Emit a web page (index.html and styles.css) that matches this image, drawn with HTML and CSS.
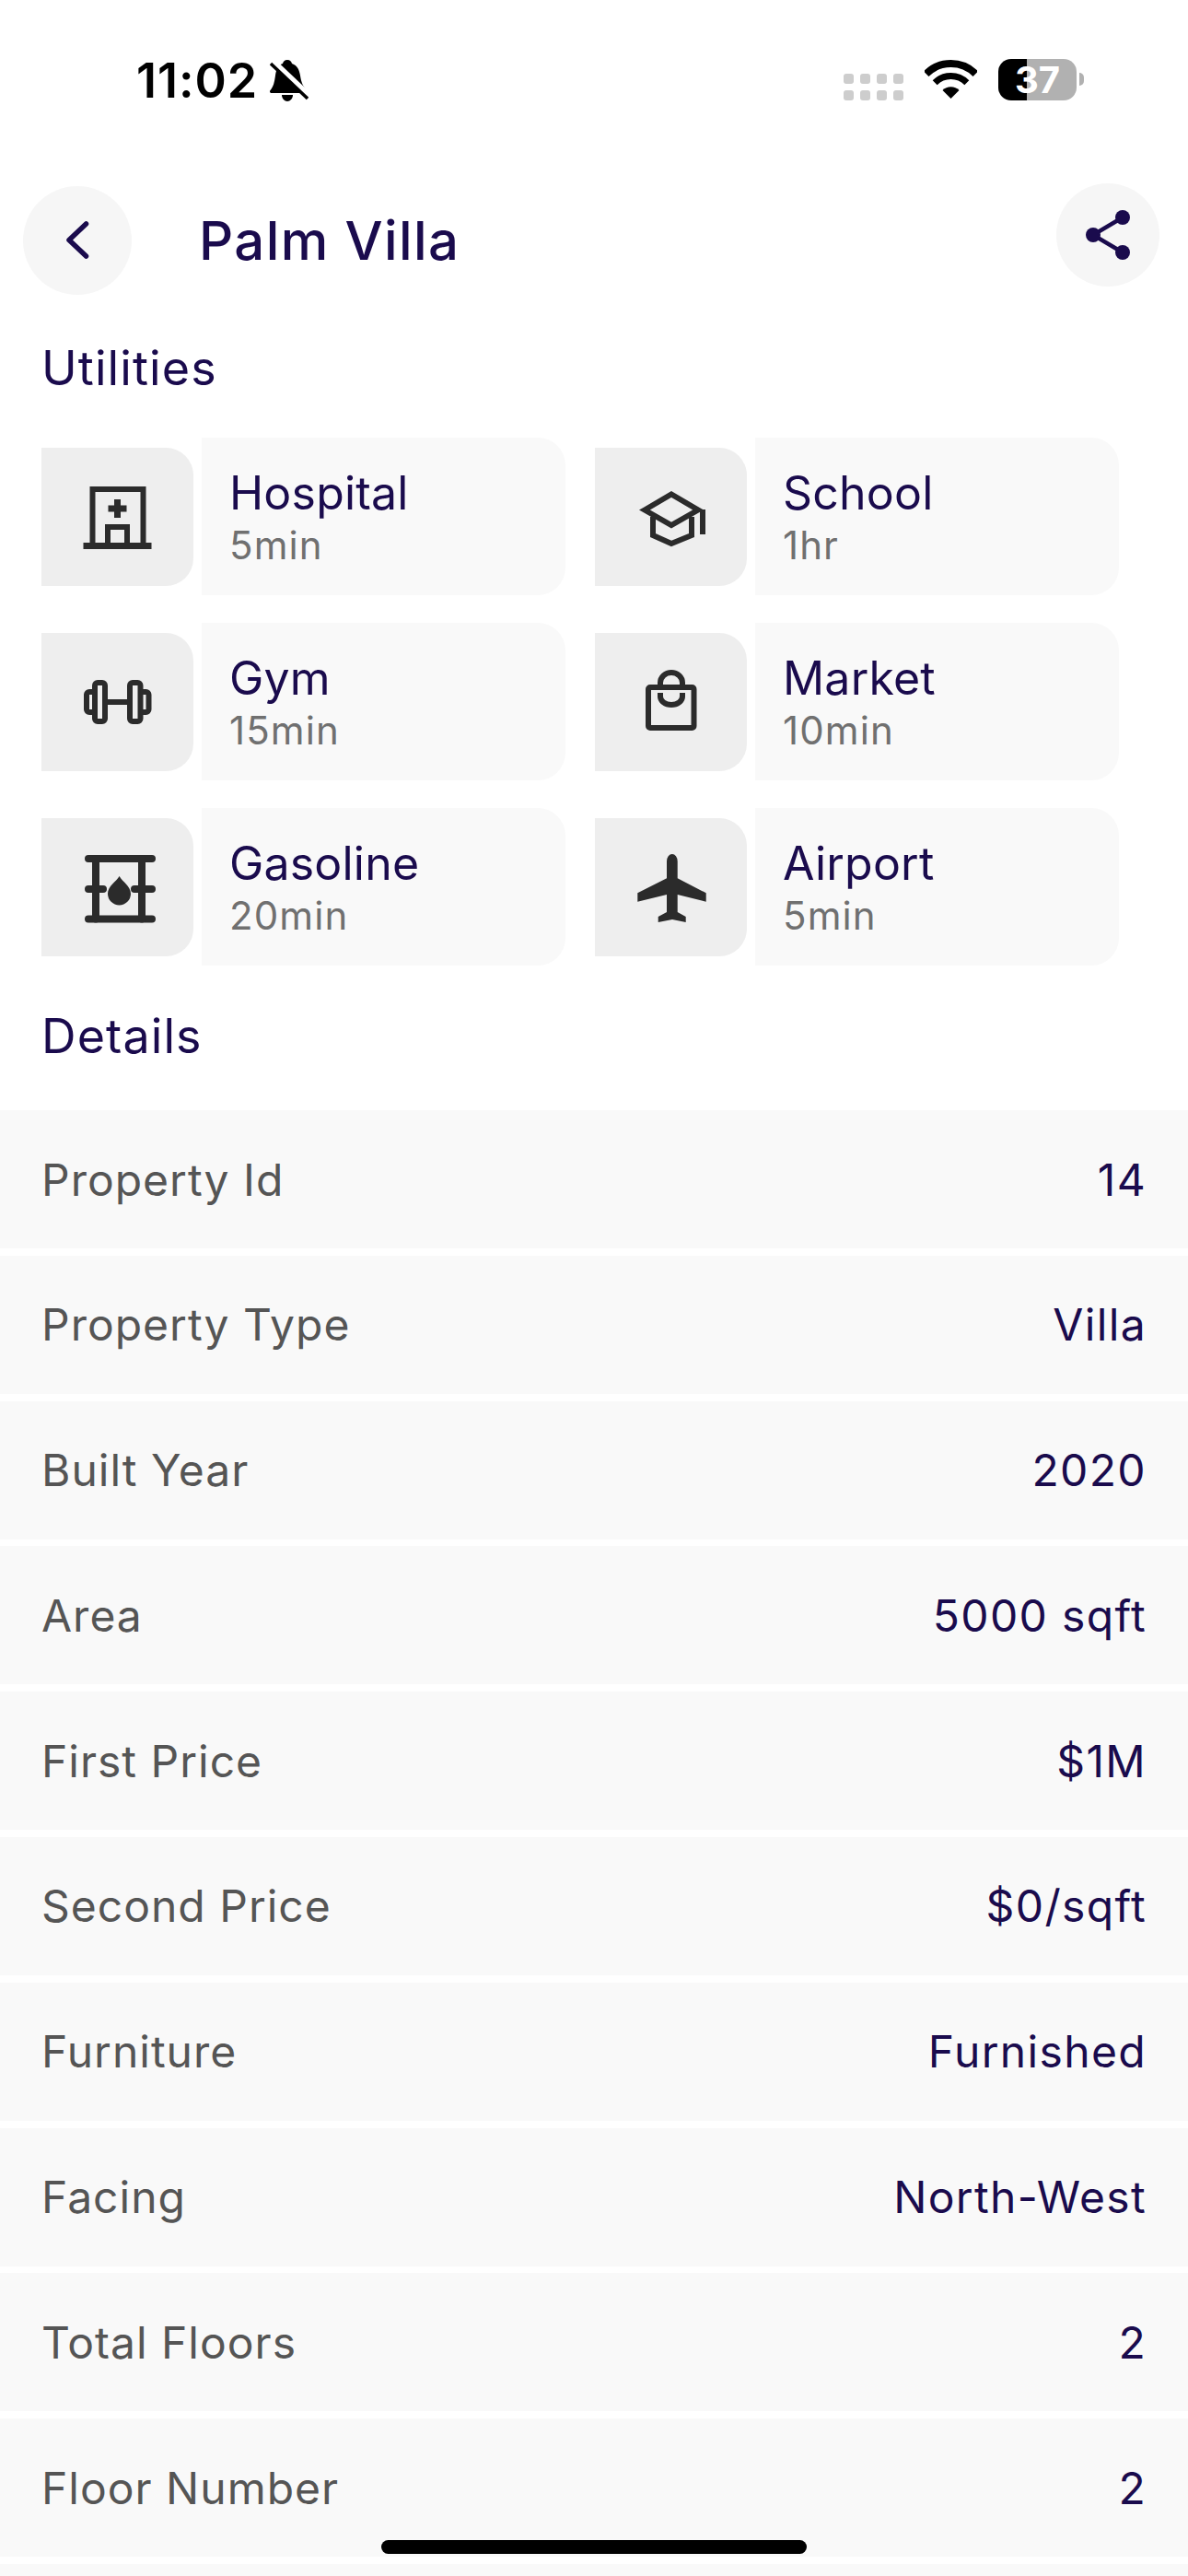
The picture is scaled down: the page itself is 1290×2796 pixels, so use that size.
FILE: index.html
```html
<!DOCTYPE html>
<html lang="en">
<head>
<meta charset="utf-8">
<title>Palm Villa</title>
<link rel="stylesheet" href="styles.css">
</head>
<body>
<div class="page">
  <div class="status">
    <span class="time">11:02</span>
    <svg class="bell" viewBox="0 0 42 45"><path class="ink" d="M19 0c3 0 4.500 2 5 4 6 2 8 7 9 13 1 7 3 12 7 16 1 1 .5 3-1.500 3H2c-2 0-2.500-2-1.500-3C4 29 5 24 6 17 7 10 9 6 14 4c.5-2 2-4 5-4z"/><path class="ink" d="M13 38h12c0 4-3 7-6 7s-6-3-6-7z"/><path class="cut" d="M2 0l40 38"/><path class="slash" d="M1 4l40 38"/></svg>
    <div class="status-right">
      <div class="dots"><i></i><i></i><i></i><i></i><i></i><i></i><i></i><i></i></div>
      <svg class="wifi" viewBox="0 0 57 42"><path class="wifi-arc w8" d="M1.630 15.130A38 38 0 0 1 55.370 15.130"/><path class="wifi-arc w7" d="M11.180 24.680A24.500 24.500 0 0 1 45.820 24.680"/><path class="ink" d="M28.500 42L19.500 33A12.700 12.700 0 0 1 37.500 33z"/></svg>
      <div class="battery"><span>37</span></div>
      <div class="nub"></div>
    </div>
  </div>

  <header class="header">
    <button class="round back" aria-label="Back">
      <svg viewBox="0 0 118 118"><path class="chev" d="M68.500 41L50 58.500 68.500 76"/></svg>
    </button>
    <h1 class="title">Palm Villa</h1>
    <button class="round share" aria-label="Share">
      <svg viewBox="0 0 112 112"><path class="share-line" d="M72 37L40 56l32 19"/><circle class="purple" cx="72" cy="37" r="8"/><circle class="purple" cx="40" cy="56" r="8"/><circle class="purple" cx="72" cy="75" r="8"/></svg>
    </button>
  </header>

  <h2 class="section utilities">Utilities</h2>
  <div class="grid">
    <div class="tile">
      <div class="tile-icon"><svg viewBox="0 0 165 150"><path class="st6" d="M55.500 104V45h55v59"/><path class="st7 bar" d="M45.500 106.500h74"/><path class="st7" d="M72.500 66h20M82.500 56v20"/><path class="st6" d="M72 104V86h21v18"/></svg></div>
      <div class="tile-body"><div class="name">Hospital</div><div class="sub">5min</div></div>
    </div>
    <div class="tile">
      <div class="tile-icon"><svg viewBox="0 0 165 150"><path class="st6" d="M54 67.500L83 50.500l29 17L83 84z"/><path class="st6" d="M63 75V95L83 104l22-9V75"/><path class="st6" d="M117 67V94"/></svg></div>
      <div class="tile-body"><div class="name">School</div><div class="sub">1hr</div></div>
    </div>
    <div class="tile">
      <div class="tile-icon"><svg viewBox="0 0 165 150"><rect class="st6" x="58" y="54" width="11" height="42" rx="3"/><rect class="st6" x="96" y="54" width="11.500" height="42" rx="3"/><path class="st6" d="M58 64h-6a3 3 0 0 0-3 3v16a3 3 0 0 0 3 3h6M107.500 64h6a3 3 0 0 1 3 3v16a3 3 0 0 1-3 3h-6M69 75h27"/></svg></div>
      <div class="tile-body"><div class="name">Gym</div><div class="sub">15min</div></div>
    </div>
    <div class="tile">
      <div class="tile-icon"><svg viewBox="0 0 165 150"><rect class="st6" x="58" y="59" width="49.500" height="44" rx="2"/><path class="st6" d="M71 59V54a12 11 0 0 1 24 0V59M71 65v4a12 9 0 0 0 24 0v-4"/></svg></div>
      <div class="tile-body"><div class="name">Market</div><div class="sub">10min</div></div>
    </div>
    <div class="tile">
      <div class="tile-icon"><svg viewBox="0 0 165 150"><path class="st8" d="M51 44h69M51 77h16M101 77h19M51 109.500h69"/><path class="st8" d="M59 44v65.500M109 44v65.500"/><path class="dark" d="M84.600 63C88 69 97 74 97 82a12.500 12.500 0 0 1-25 0C72 74 81 69 84.600 63z"/></svg></div>
      <div class="tile-body"><div class="name">Gasoline</div><div class="sub">20min</div></div>
    </div>
    <div class="tile">
      <div class="tile-icon"><svg viewBox="0 0 165 150"><path class="dark" d="M78 47a5.850 8 0 0 1 11.700 0V65.300L120.700 81.300V90.700L89.700 83V102L98.700 107V113L84 110 68.700 113V107L78 102V83L46.300 90.700V81.300L78 65.300z"/></svg></div>
      <div class="tile-body"><div class="name">Airport</div><div class="sub">5min</div></div>
    </div>
  </div>

  <h2 class="section details">Details</h2>
  <div class="rows">
    <div class="row"><span class="label">Property Id</span><span class="value">14</span></div>
    <div class="row"><span class="label">Property Type</span><span class="value">Villa</span></div>
    <div class="row"><span class="label">Built Year</span><span class="value">2020</span></div>
    <div class="row"><span class="label">Area</span><span class="value">5000 sqft</span></div>
    <div class="row"><span class="label">First Price</span><span class="value">$1M</span></div>
    <div class="row"><span class="label">Second Price</span><span class="value">$0/sqft</span></div>
    <div class="row"><span class="label">Furniture</span><span class="value">Furnished</span></div>
    <div class="row"><span class="label">Facing</span><span class="value">North-West</span></div>
    <div class="row"><span class="label">Total Floors</span><span class="value">2</span></div>
    <div class="row"><span class="label">Floor Number</span><span class="value">2</span></div>
    <div class="row"></div>
  </div>

  <div class="home-bar"></div>
</div>
</body>
</html>
```

FILE: styles.css
```css
* { box-sizing: border-box; }
html, body { margin: 0; padding: 0; background: #fff; }
.page {
  position: relative;
  width: 1290px;
  height: 2796px;
  overflow: hidden;
  background: #fff;
  font-family: Inter, "Noto Sans", sans-serif;
  color: #1a0b4d;
}

/* status bar */
.status {
  display: flex;
  align-items: flex-start;
  height: 199px;
  padding: 60px 0 0 148px;
}
.time {
  font-size: 52px;
  line-height: 55px;
  font-weight: 600;
  color: #000;
  letter-spacing: 1px;
}
.bell { width: 42px; height: 45px; margin: 5px 0 0 13px; }
.ink { fill: #000; }
.cut { stroke: #fff; stroke-width: 6; fill: none; }
.slash { stroke: #000; stroke-width: 3.5; fill: none; }
.status-right { display: flex; align-items: flex-start; margin-left: auto; padding-right: 113px; }
.dots {
  display: grid;
  grid-template-columns: repeat(4, 11px);
  grid-auto-rows: 11px;
  gap: 7px;
  margin-top: 20px;
}
.dots i { background: #cdcdcd; border-radius: 3px; }
.wifi { width: 57px; height: 42px; margin: 5px 0 0 23px; }
.wifi-arc { fill: none; stroke: #000; }
.w8 { stroke-width: 8; }
.w7 { stroke-width: 7; }
.battery {
  width: 85px;
  height: 45px;
  margin: 4px 0 0 23px;
  border-radius: 14px;
  background: linear-gradient(90deg, #000 31px, #b1b1b1 31px);
  color: #fff;
  font-size: 40px;
  line-height: 45px;
  font-weight: 700;
  text-align: center;
}
.nub { width: 5px; height: 14px; margin: 19px 0 0 3px; background: #b1b1b1; border-radius: 0 5px 5px 0; }

/* header */
.header {
  display: flex;
  align-items: flex-start;
  height: 121px;
  padding: 0 31px 0 25px;
}
.round {
  display: block;
  flex: none;
  padding: 0;
  border: 0;
  border-radius: 50%;
  background: #f6f6f6;
}
.round svg { display: block; width: 100%; height: 100%; }
.back { width: 118px; height: 118px; margin-top: 3px; }
.share { width: 112px; height: 112px; margin-left: auto; }
.chev { fill: none; stroke: #1a0b4d; stroke-width: 5.5; stroke-linecap: round; stroke-linejoin: round; }
.share-line { fill: none; stroke: #1a0b4d; stroke-width: 4.5; }
.purple { fill: #1a0b4d; }
.title {
  margin: 32px 0 0 73px;
  font-size: 58px;
  line-height: 60px;
  font-weight: 480;
  letter-spacing: 1.4px;
}

/* sections */
.section {
  margin: 0;
  padding-left: 45px;
  font-size: 52px;
  line-height: 60px;
  font-weight: 380;
  letter-spacing: 1.1px;
}
.utilities { margin-top: 50px; }
.details { margin-top: 47px; }

/* utilities */
.grid {
  display: grid;
  grid-template-columns: 569px 569px;
  column-gap: 32px;
  row-gap: 30px;
  margin-top: 45px;
  padding-left: 45px;
}
.tile { display: flex; align-items: center; gap: 9px; }
.tile-icon {
  flex: none;
  width: 165px;
  height: 150px;
  background: #eeeeee;
  border-radius: 0 30px 30px 0;
}
.tile-icon svg { display: block; width: 100%; height: 100%; }
.st6 { fill: none; stroke: #2b2b2b; stroke-width: 6; }
.st7 { fill: none; stroke: #2b2b2b; stroke-width: 7; }
.st8 { fill: none; stroke: #2b2b2b; stroke-width: 8; stroke-linecap: round; }
.dark { fill: #2b2b2b; }
.tile-body {
  flex: 1;
  height: 171px;
  padding: 33px 0 0 30px;
  background: #f9f9f9;
  border-radius: 0 30px 30px 0;
}
.name { font-size: 50px; line-height: 55px; font-weight: 380; letter-spacing: 0.2px; }
.sub { font-size: 42px; line-height: 57px; font-weight: 380; color: #707070; letter-spacing: 1.1px; }

/* details */
.rows { display: flex; flex-direction: column; gap: 7.8px; margin-top: 50px; }
.row {
  display: flex;
  align-items: center;
  justify-content: space-between;
  flex: none;
  height: 150px;
  padding: 0 45px;
  background: #f9f9f9;
  font-size: 48px;
  font-weight: 380;
}
.label { color: #555555; letter-spacing: 1px; }
.value { color: #1a0b4d; letter-spacing: 1.35px; }

.home-bar {
  position: absolute;
  left: 414px;
  top: 2757px;
  width: 462px;
  height: 15px;
  background: #000;
  border-radius: 8px;
}
```
